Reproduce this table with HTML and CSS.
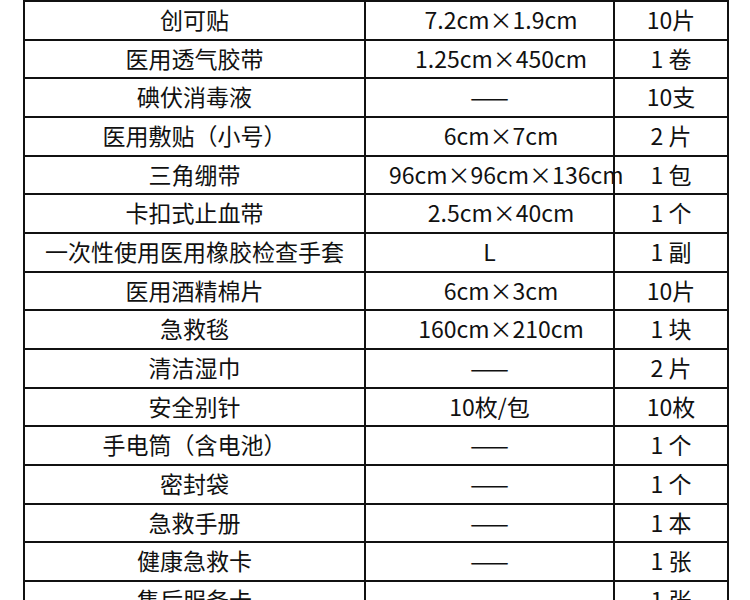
FILE: index.html
```html
<!DOCTYPE html>
<html lang="zh-CN">
<head>
<meta charset="utf-8">
<title>急救包清单</title>
<link rel="stylesheet" href="styles.css">
</head>
<body>
<div class="page">
  <div class="table">
    <div class="cell">创可贴</div><div class="cell dim">7.2cm×1.9cm</div><div class="cell">10片</div>
    <div class="cell">医用透气胶带</div><div class="cell dim">1.25cm×450cm</div><div class="cell">1 卷</div>
    <div class="cell">碘伏消毒液</div><div class="cell">——</div><div class="cell">10支</div>
    <div class="cell">医用敷贴（小号）</div><div class="cell dim">6cm×7cm</div><div class="cell">2 片</div>
    <div class="cell">三角绷带</div><div class="cell dim">96cm×96cm×136cm</div><div class="cell">1 包</div>
    <div class="cell">卡扣式止血带</div><div class="cell dim">2.5cm×40cm</div><div class="cell">1 个</div>
    <div class="cell">一次性使用医用橡胶检查手套</div><div class="cell">L</div><div class="cell">1 副</div>
    <div class="cell">医用酒精棉片</div><div class="cell dim">6cm×3cm</div><div class="cell">10片</div>
    <div class="cell">急救毯</div><div class="cell dim">160cm×210cm</div><div class="cell">1 块</div>
    <div class="cell">清洁湿巾</div><div class="cell">——</div><div class="cell">2 片</div>
    <div class="cell">安全别针</div><div class="cell">10枚/包</div><div class="cell">10枚</div>
    <div class="cell">手电筒（含电池）</div><div class="cell">——</div><div class="cell">1 个</div>
    <div class="cell">密封袋</div><div class="cell">——</div><div class="cell">1 个</div>
    <div class="cell">急救手册</div><div class="cell">——</div><div class="cell">1 本</div>
    <div class="cell">健康急救卡</div><div class="cell">——</div><div class="cell">1 张</div>
    <div class="cell">售后服务卡</div><div class="cell">——</div><div class="cell">1 张</div>
  </div>
</div>
</body>
</html>
```
FILE: styles.css
```css
html, body {
  margin: 0;
  padding: 0;
  background: #fff;
}
.page {
  padding: 0 0 0 23px;
  font-family: "Noto Sans CJK SC", "Noto Sans", sans-serif;
  font-size: 23px;
  color: #111;
}
.table {
  display: grid;
  grid-template-columns: 341px 249px 114px;
  grid-auto-rows: 38.667px;
  width: 706px;
  box-sizing: border-box;
  border-left: 2px solid #111;
  border-top: 2px solid #111;
}
.cell {
  box-sizing: border-box;
  border-right: 2px solid #111;
  border-bottom: 2px solid #111;
  text-align: center;
  white-space: nowrap;
  line-height: 34px;
  padding-bottom: 2px;
  min-width: 0;
}
.dim {
  padding-left: 23px;
}
```
